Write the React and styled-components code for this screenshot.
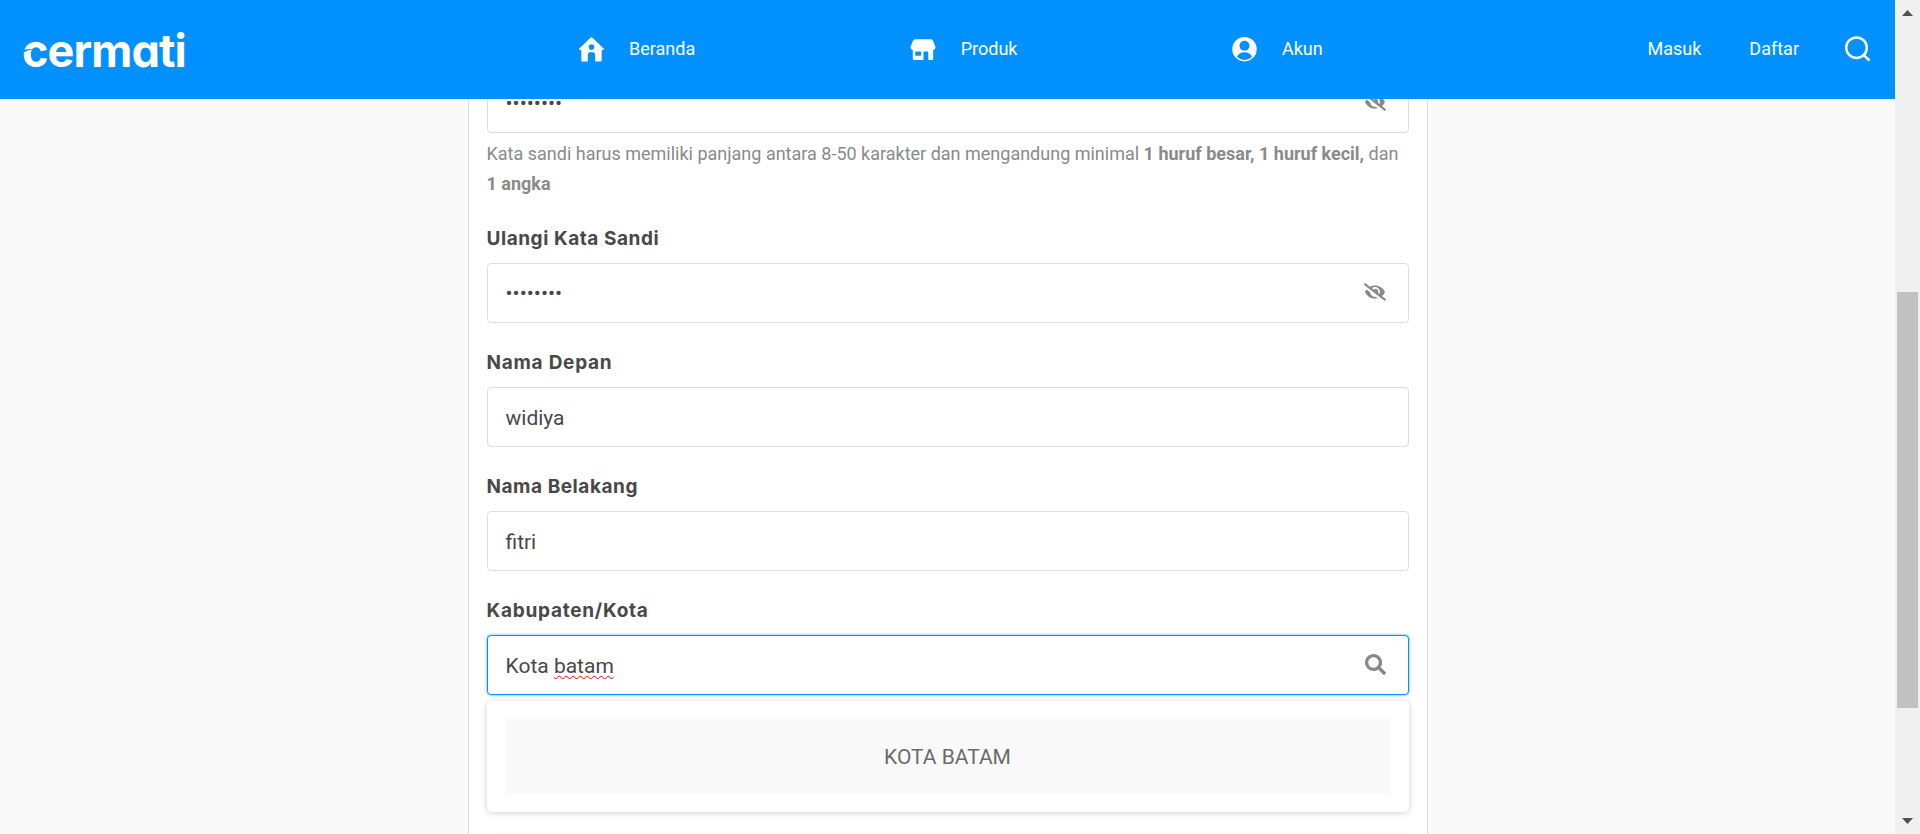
import React from 'react';
import styled, { createGlobalStyle } from 'styled-components';
import { FaEyeSlash, FaSearch } from 'react-icons/fa';

const GlobalStyle = createGlobalStyle`
  *, *::before, *::after { box-sizing: border-box; }
  body { margin: 0; background: #f9f9f9; color: #484848; font: 21px/30px Roboto, "Liberation Sans", sans-serif; }
`;

const Screen = styled.div`display: flex; height: 834px; overflow: hidden;`;
const Page = styled.div`flex: 1; display: flex; flex-direction: column; min-width: 0;`;

const Header = styled.header`
  flex: none; height: 99px; padding: 0 24px 0 22px; background: #0091ff; color: #fff;
  display: flex; align-items: center; font-size: 18px; line-height: 30px;
`;
const Logo = styled.div`
  position: relative; width: 164px; height: 60px; margin-top: 3px;
  font: 700 45px/60px Inter, sans-serif; letter-spacing: -0.9px;
  font-variant-ligatures: none; white-space: nowrap;
`;
const RoundA = styled.span`display: inline-block; font-style: italic; transform: skewX(10deg);`;
const Swoosh = styled.svg`position: absolute; left: 0; top: 22px;`;
const Nav = styled.nav`display: flex; gap: 214.5px; margin-left: 393px;`;
const NavItem = styled.a`display: flex; align-items: center; gap: 25px; svg { margin-top: -1px; }`;
const NavText = styled.span`margin-top: -2px;`;
const Actions = styled.div`
  display: flex; align-items: center; margin-left: auto; gap: 48px;
  svg { margin: -2px 0 0 -2px; }
`;

const Content = styled.main`flex: 1; overflow: hidden; display: flex; justify-content: center; align-items: flex-start;`;
const Card = styled.section`
  width: 960px; height: 800px; margin-top: -26px; padding: 0 18px;
  background: #fff; border: solid #ddd; border-width: 0 1px;
`;
const Field = styled.div`position: relative; margin-bottom: 22px;`;
const Label = styled.label`
  display: block; height: 42px; padding-top: 5px;
  font: 700 19px/26px Inter, sans-serif; letter-spacing: ${p => p.$tracking || 0.55}px;
`;
const InputBox = styled.div`
  height: 60px; padding: 1px 22px 0 18px; border-radius: 4px; background: #fff;
  border: 1px solid ${p => (p.$focus ? '#0091ff' : '#ddd')};
  box-shadow: ${p => (p.$focus ? '0 0 3px rgba(0,145,255,.75)' : 'none')};
  display: flex; align-items: center; justify-content: space-between;
  svg { color: #888; margin-top: -3px; }
`;
const Dots = styled.span`margin-top: -2px;`;
const Misspelt = styled.span`
  text-decoration: underline wavy #f00 1.2px; text-underline-offset: 2px; text-decoration-skip-ink: none;
`;
const Hint = styled.p`margin: 6px 0 0; font-size: 18px; line-height: 30px; color: #8a8a8a;`;
const Menu = styled.div`
  position: absolute; left: 0; right: 0; top: 108px; height: 111px; padding: 18px;
  background: #fff; border-radius: 5px; box-shadow: 0 1px 6px rgba(0,0,0,.2);
`;
const Option = styled.div`height: 75px; line-height: 77px; background: #f9f9f9; color: #6b6b6b; text-align: center;`;
const ErrorText = styled.p`margin: 92px 0 0; color: #e00000; font-size: 18px; line-height: 30px;`;
const Notice = styled.div`height: 60px; margin-top: 16px; border-radius: 4px; background: #fff9ee;`;

const Scrollbar = styled.div`
  flex: none; width: 25px; background: #f0f0f0; display: flex; flex-direction: column; align-items: center;
  padding: 10px 0;
`;
const Arrow = styled.svg`display: block; fill: #505050;`;
const Thumb = styled.div`width: 21px; height: 416px; margin: 276px 0 auto; background: #c1c1c1;`;

const HomeIcon = () => (
  <svg width="25" height="25" viewBox="0 0 25 25" fill="#fff" fillRule="evenodd">
    <path d="M12.5.3c.5 0 .9.2 1.3.6L24.6 11.6c.6.6.2 1.5-.6 1.5h-1.3v10.1c0 .8-.5 1.3-1.3 1.3h-5.2v-6.2c0-2.2-1.3-3.3-3.7-3.3s-3.7 1.1-3.7 3.3v6.2H3.6c-.8 0-1.300-.5-1.300-1.300V13.100H1c-.8 0-1.200-.9-.6-1.500L11.200.9c.4-.4.800-.6 1.300-.6zM12.500 7.300a2.800 2.800 0 1 0 0 5.600a2.800 2.800 0 1 0 0-5.600z" />
  </svg>
);
const StoreIcon = () => (
  <svg width="26" height="25" viewBox="0 0 26 25" fill="#fff" fillRule="evenodd">
    <path d="M5.500 2.200h15c1.100 0 1.900.5 2.400 1.500l2.300 5.300c.7 1.900-.1 3.600-2 4v8.500c0 1-.6 1.500-1.500 1.500h-3.400v-7.200c0-.8-.4-1.200-1.200-1.200h-2.400c-.8 0-1.200.4-1.200 1.200v7.200H4.300c-.9 0-1.500-.5-1.500-1.500V13c-1.900-.4-2.700-2.100-2-4l2.300-5.300c.5-1 1.300-1.500 2.400-1.500zM6.200 14.500c-.6 0-1 .4-1 1v2.300c0 .6.4 1 1 1h3.900c.6 0 1-.4 1-1v-2.300c0-.6-.4-1-1-1z" />
  </svg>
);
const AccountIcon = () => (
  <svg width="25" height="25" viewBox="0 0 25 25">
    <circle cx="12.500" cy="12.200" r="12.200" fill="#fff" />
    <circle cx="12.500" cy="8.800" r="5" fill="#0091ff" />
    <path d="M5 19.600c1.600-2.900 4.200-4.300 7.500-4.300s5.900 1.400 7.500 4.300c-2 2.300-4.500 3.500-7.500 3.500s-5.500-1.200-7.500-3.500z" fill="#0091ff" />
  </svg>
);
const SearchIcon = () => (
  <svg width="26" height="26" viewBox="0 0 26 26" fill="none" stroke="#fff" strokeWidth="2.500">
    <circle cx="11.500" cy="11.700" r="10.300" />
    <path d="M18.500 18.900l6 5.800" />
  </svg>
);

const navItems = [
  ['Beranda', HomeIcon],
  ['Produk', StoreIcon],
  ['Akun', AccountIcon],
];

export default function App() {
  return (
    <>
      <GlobalStyle />
      <Screen>
        <Page>
          <Header>
            <Logo>
              cerm<RoundA>a</RoundA>ti
              <Swoosh width="16" height="16" viewBox="0 0 16 16" fill="#0091ff">
                <path d="M0 8Q5 4.800 12 6.500Q6 6.600 1.500 9.500L0 10z" />
              </Swoosh>
            </Logo>
            <Nav>
              {navItems.map(([name, Icon]) => (
                <NavItem key={name}><Icon /><NavText>{name}</NavText></NavItem>
              ))}
            </Nav>
            <Actions>
              <NavText>Masuk</NavText>
              <NavText>Daftar</NavText>
              <SearchIcon />
            </Actions>
          </Header>
          <Content>
            <Card>
              <Field>
                <InputBox><Dots>••••••••</Dots><FaEyeSlash size={22} /></InputBox>
                <Hint>
                  Kata sandi harus memiliki panjang antara 8-50 karakter dan mengandung minimal <b>1 huruf besar, 1 huruf kecil,</b> dan <b>1 angka</b>
                </Hint>
              </Field>
              <Field>
                <Label>Ulangi Kata Sandi</Label>
                <InputBox><Dots>••••••••</Dots><FaEyeSlash size={22} /></InputBox>
              </Field>
              <Field>
                <Label $tracking={0.75}>Nama Depan</Label>
                <InputBox>widiya</InputBox>
              </Field>
              <Field>
                <Label>Nama Belakang</Label>
                <InputBox>fitri</InputBox>
              </Field>
              <Field>
                <Label $tracking={0.75}>Kabupaten/Kota</Label>
                <InputBox $focus><span>Kota <Misspelt>batam</Misspelt></span><FaSearch size={21} /></InputBox>
                <ErrorText>Kabupaten/Kota yang Anda pilih tidak tersedia</ErrorText>
                <Notice />
                <Menu><Option>KOTA BATAM</Option></Menu>
              </Field>
            </Card>
          </Content>
        </Page>
        <Scrollbar>
          <Arrow width="11" height="6" viewBox="0 0 11 6"><path d="M0 6L5.500 0L11 6z" /></Arrow>
          <Thumb />
          <Arrow width="11" height="6" viewBox="0 0 11 6"><path d="M0 0L5.500 6L11 0z" /></Arrow>
        </Scrollbar>
      </Screen>
    </>
  );
}
